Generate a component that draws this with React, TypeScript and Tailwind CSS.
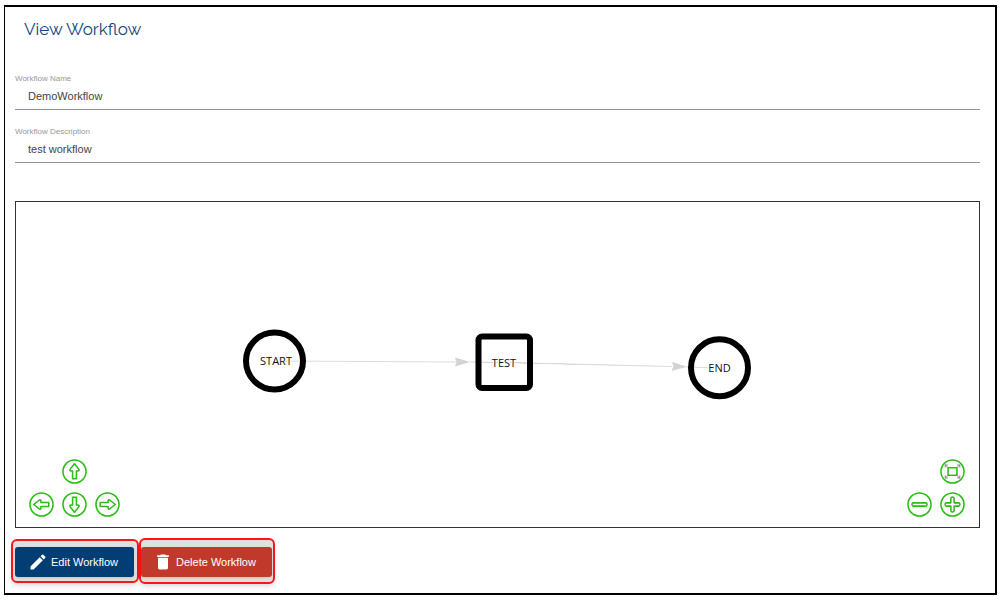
import type { ReactNode } from "react";
import { MdDelete, MdEdit } from "react-icons/md";

function Field({ id, label, value }: { id: string; label: string; value: string }) {
  return (
    <div className="flex flex-col">
      <label htmlFor={id} className="text-[8px] leading-3 text-[#999]">
        {label}
      </label>
      <input
        id={id}
        type="text"
        readOnly
        value={value}
        className="h-[25px] w-full border-b border-[#949494] bg-transparent pb-[3px] pl-[13px] text-[11px] text-[#444] outline-none"
      />
    </div>
  );
}

function NavButton({ label, place, children }: { label: string; place: string; children: ReactNode }) {
  return (
    <button type="button" aria-label={label} className={`size-[25px] ${place}`}>
      <svg viewBox="0 0 26 26" className="block size-full" fill="none" stroke="#2cbb17" strokeWidth="1.6" strokeLinejoin="round">
        <circle cx="13" cy="13" r="12" />
        {children}
      </svg>
    </button>
  );
}

const ARROW = "M13 4.9 L17.7 10.8 Q18.2 12.4 16.6 12.4 H15 V20.6 H11 V12.4 H9.4 Q7.8 12.4 8.3 10.8 Z";

function Diagram() {
  return (
    <svg viewBox="0 0 963 325" className="block w-full" role="img" aria-label="Workflow diagram">
      <g stroke="#dcdcdc" strokeWidth="1">
        <path d="M259 159 L440 160 M454 160 L488 160.5 L656 164.5 M670 165 L704 166" />
      </g>
      <g fill="#d3d3d3">
        <path d="M439 155.5 L454 160 L439 164.5 L440.5 160 Z" />
        <path d="M656 160 L671 164.8 L655.5 169 L657.5 164.5 Z" />
      </g>
      <g fill="none" stroke="#000" strokeWidth="6">
        <circle cx="258.5" cy="159" r="28.5" />
        <rect x="462.5" y="134.5" width="51.5" height="51.5" rx="3.5" />
        <circle cx="703.5" cy="165.7" r="28.5" />
      </g>
      <g className="font-['Open_Sans',sans-serif] text-[11px]" textAnchor="middle" fill="#111" stroke="#fff" strokeWidth="2" paintOrder="stroke">
        <text x="260" y="163">START</text>
        <text x="488" y="165">TEST</text>
        <text x="703.5" y="169.5">END</text>
      </g>
    </svg>
  );
}

export default function App() {
  return (
    <div className="bg-white pt-[5px] pr-[7px] pb-[6px] pl-1 font-['Liberation_Sans',Arial,sans-serif]">
      <main className="border-2 border-l border-black pt-[10px] pr-[15px] pb-[9px] pl-[10px]">
        <h1 className="pl-[9px] font-[Raleway,Lato,sans-serif] text-[17px] leading-6 font-normal text-[#12477d]">View Workflow</h1>

        <div className="mt-8 flex flex-col gap-4">
          <Field id="workflow-name" label="Workflow Name" value="DemoWorkflow" />
          <Field id="workflow-description" label="Workflow Description" value="test workflow" />
        </div>

        <section className="relative mt-[38px] border border-[#333]">
          <Diagram />
          <div className="absolute bottom-[10px] left-[13px] grid grid-cols-3 gap-2">
            <NavButton label="Pan up" place="col-start-2">
              <path d={ARROW} />
            </NavButton>
            <NavButton label="Pan left" place="col-start-1 row-start-2">
              <path d={ARROW} transform="rotate(-90 13 13)" />
            </NavButton>
            <NavButton label="Pan down" place="row-start-2">
              <path d={ARROW} transform="rotate(180 13 13)" />
            </NavButton>
            <NavButton label="Pan right" place="row-start-2">
              <path d={ARROW} transform="rotate(90 13 13)" />
            </NavButton>
          </div>
          <div className="absolute right-[14px] bottom-[10px] grid grid-cols-2 gap-2">
            <NavButton label="Fit to view" place="col-start-2">
              <rect x="8.4" y="9.2" width="9.2" height="7.6" />
              <path
                d="M5.4 9 V6.2 H8.2 M5.4 6.2 L8.3 9 M17.8 6.2 H20.6 V9 M20.6 6.2 L17.7 9 M5.4 17 V19.8 H8.2 M5.4 19.8 L8.3 17 M17.8 19.8 H20.6 V17 M20.6 19.8 L17.7 17"
                stroke="#777"
                strokeWidth="0.9"
              />
            </NavButton>
            <NavButton label="Zoom out" place="col-start-1 row-start-2">
              <rect x="5.2" y="11.3" width="15.6" height="3.4" rx="1.4" />
            </NavButton>
            <NavButton label="Zoom in" place="row-start-2">
              <path d="M11.3 6.5 Q11.3 5.3 13 5.3 T14.7 6.5 V11.3 H19.5 Q20.7 11.3 20.7 13 T19.5 14.7 H14.7 V19.5 Q14.7 20.7 13 20.7 T11.3 19.5 V14.7 H6.5 Q5.3 14.7 5.3 13 T6.5 11.3 H11.3 Z" />
            </NavButton>
          </div>
        </section>

        <div className="mt-[10px] -ml-1 flex items-center text-[11px] text-white">
          <div className="rounded-md border-2 border-[#fb1419] bg-[#e0e0e0] pt-[6px] pr-[3px] pb-1 pl-[2px] shadow-md">
            <button type="button" className="flex h-[30px] items-center gap-[3px] rounded-[3px] bg-[#023e73] pr-4 pl-[13px] shadow-sm">
              <MdEdit size={20} />
              Edit Workflow
            </button>
          </div>
          <div className="rounded-md border-2 border-[#fb1419] bg-[#e0e0e0] pt-[7px] pr-[1px] pb-[5px] shadow-md">
            <button type="button" className="flex h-[30px] items-center gap-[3px] rounded-[3px] bg-[#c0392b] pr-4 pl-3 shadow-sm">
              <MdDelete size={20} />
              Delete Workflow
            </button>
          </div>
        </div>
      </main>
    </div>
  );
}
